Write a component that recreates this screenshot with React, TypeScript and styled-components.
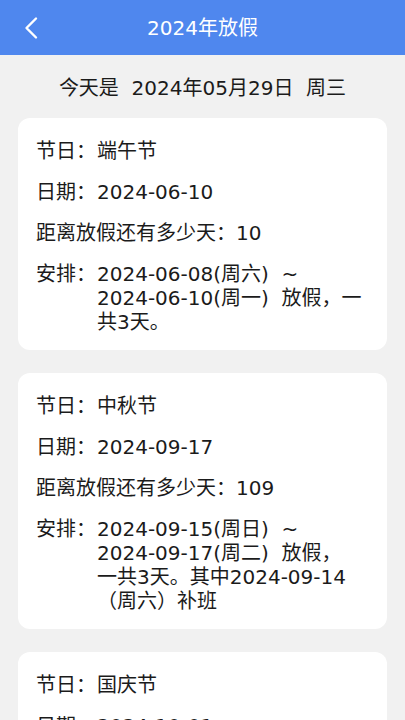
import React from 'react'
import styled, { createGlobalStyle } from 'styled-components';

const GlobalStyle = createGlobalStyle`
  * { box-sizing: border-box; }
  body {
    margin: 0;
    background: #f1f1f1;
    font-family: "DejaVu Sans", "Noto Sans CJK SC", sans-serif;
    color: #1b1b1b;
  }
`;

const Page = styled.div`
  min-height: 100vh;
  background: #f1f1f1;
`;

const Header = styled.header`
  height: 55px;
  background: #4f87ee;
  display: flex;
  align-items: center;
  justify-content: center;
  position: relative;
  color: #fff;
`;

const BackButton = styled.button`
  position: absolute;
  left: 20px;
  top: 50%;
  transform: translateY(-50%);
  background: none;
  border: 0;
  padding: 0;
  display: flex;
  cursor: pointer;
`;

const Title = styled.h1`
  margin: 0;
  font-size: 20px;
  font-weight: 400;
  line-height: 24px;
`;

const Today = styled.div`
  padding: 21px 0 18px;
  text-align: center;
  font-size: 20px;
  line-height: 24px;
  white-space: pre;
`;

const List = styled.div`
  display: flex;
  flex-direction: column;
  gap: 23px;
  padding: 0 18px 24px;
`;

const Card = styled.div`
  background: #fff;
  border-radius: 12px;
  padding: 21px 18px 16px;
  display: flex;
  flex-direction: column;
  gap: 17px;
`;

const Row = styled.div`
  display: flex;
  font-size: 20px;
  line-height: 24px;
`;

const Label = styled.span`
  flex-shrink: 0;
  min-width: 61px;
`;

const Value = styled.span`
  flex: 1;
  white-space: pre-wrap;
`;

const NoWrap = styled.span`
  white-space: nowrap;
`;

interface Holiday {
  name: string;
  date: string;
  left: number;
  plan: string;
}

const holidays: Holiday[] = [
  {
    name: '端午节',
    date: '2024-06-10',
    left: 10,
    plan: '2024-06-08(周六)  ~  2024-06-10(周一)  放假，一共3天。',
  },
  {
    name: '中秋节',
    date: '2024-09-17',
    left: 109,
    plan: '2024-09-15(周日)  ~  2024-09-17(周二)  放假，\n一共3天。其中2024-09-14\n（周六）补班',
  },
  {
    name: '国庆节',
    date: '2024-10-01',
    left: 123,
    plan: '2024-10-01(周二)  ~  2024-10-07(周一)  放假，一共7天。其中2024-09-29（周日）、2024-10-12（周六）补班',
  },
];

// keep "2024-06-08(周六)" together so it never breaks at the hyphens
const renderPlan = (text: string) =>
  text.split(/(\d{4}-\d{2}-\d{2}(?:\([^)]*\))?)/).map((part, i) =>
    i % 2 ? <NoWrap key={i}>{part}</NoWrap> : part
  );

const ChevronLeft = () => (
  <svg width="20" height="24" viewBox="0 0 20 24" fill="none">
    <path d="M16 2.5L6.5 12l9.5 9.5" stroke="#fff" strokeWidth="2.4" strokeLinecap="round" strokeLinejoin="round" />
  </svg>
);

const App = () => {
  return (
    <Page>
      <GlobalStyle />
      <Header>
        <BackButton aria-label="返回">
          <ChevronLeft />
        </BackButton>
        <Title>2024年放假</Title>
      </Header>
      <Today>{'今天是  2024年05月29日  周三'}</Today>
      <List>
        {holidays.map((h) => (
          <Card key={h.name}>
            <Row>
              <Label>节日：</Label>
              <Value>{h.name}</Value>
            </Row>
            <Row>
              <Label>日期：</Label>
              <Value>{h.date}</Value>
            </Row>
            <Row>
              <span>距离放假还有多少天：{h.left}</span>
            </Row>
            <Row>
              <Label>安排：</Label>
              <Value>{renderPlan(h.plan)}</Value>
            </Row>
          </Card>
        ))}
      </List>
    </Page>
  )
}

export default App
